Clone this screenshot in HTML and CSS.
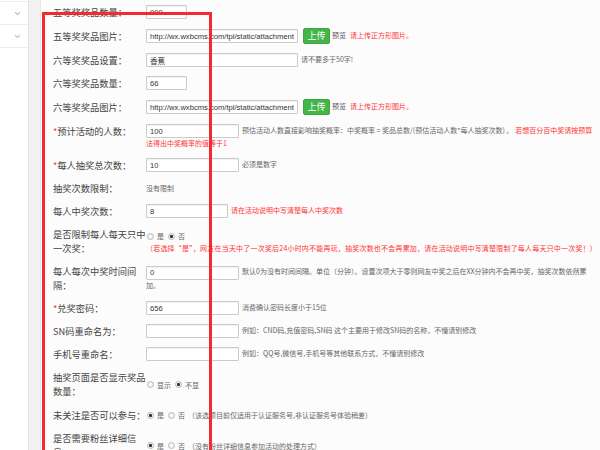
FILE: index.html
```html
<!DOCTYPE html>
<html lang="zh-CN">
<head>
<meta charset="utf-8">
<title>抽奖设置</title>
<link rel="stylesheet" href="styles.css">
</head>
<body>
<div class="page">
  <aside class="sidebar">
    <ul class="menu">
      <li class="menu-item"><svg class="chev" width="7" height="5" viewBox="0 0 7 5"><path d="M1 1.2 L3.5 3.6 L6 1.2" fill="none" stroke="#9bc3df" stroke-width="1.1"/></svg></li>
      <li class="menu-item"><svg class="chev" width="7" height="5" viewBox="0 0 7 5"><path d="M1 1.2 L3.5 3.6 L6 1.2" fill="none" stroke="#9bc3df" stroke-width="1.1"/></svg></li>
    </ul>
  </aside>
  <main class="main">
    <div class="panel">
      <form class="form">
        <div class="row">
          <div class="label">五等奖奖品数量：</div>
          <div class="field"><input class="txt w-xs" value="999"></div>
        </div>
        <div class="row">
          <div class="label">五等奖奖品图片：</div>
          <div class="field"><input class="txt w-long" value="http://wx.wxbcms.com/tpl/static/attachment/images/prize6.png"><button type="button" class="btn">上传</button><span class="preview">预览</span><span class="warn strong">请上传正方形图片。</span></div>
        </div>
        <div class="row">
          <div class="label">六等奖奖品设置：</div>
          <div class="field"><input class="txt w-long" value="香蕉"><span class="after">请不要多于50字!</span></div>
        </div>
        <div class="row">
          <div class="label">六等奖奖品数量：</div>
          <div class="field"><input class="txt w-xs" value="66"></div>
        </div>
        <div class="row">
          <div class="label">六等奖奖品图片：</div>
          <div class="field"><input class="txt w-long" value="http://wx.wxbcms.com/tpl/static/attachment/images/prize6.png"><button type="button" class="btn">上传</button><span class="preview">预览</span><span class="warn strong">请上传正方形图片。</span></div>
        </div>
        <div class="row top">
          <div class="label"><em class="req">*</em>预计活动的人数：</div>
          <div class="field"><input class="txt w-mid" value="100"><span class="after">预估活动人数直接影响抽奖概率：中奖概率 = 奖品总数/(预估活动人数*每人抽奖次数) 。</span><span class="warn tail">若想百分百中奖请按预算法得出中奖概率的值等于1</span></div>
        </div>
        <div class="row">
          <div class="label"><em class="req">*</em>每人抽奖总次数：</div>
          <div class="field"><input class="txt w-mid" value="10"><span class="after">必须是数字</span></div>
        </div>
        <div class="row">
          <div class="label">抽奖次数限制：</div>
          <div class="field">没有限制</div>
        </div>
        <div class="row">
          <div class="label">每人中奖次数：</div>
          <div class="field"><input class="txt w-sm" value="8"><span class="after warn">请在活动说明中写清楚每人中奖次数</span></div>
        </div>
        <div class="row">
          <div class="label">是否限制每人每天只中一次奖：</div>
          <div class="field">
            <div class="opts"><input type="radio" class="radio" name="daily"><span class="opt">是</span><input type="radio" class="radio" name="daily" checked><span class="opt">否</span></div>
            <div class="warn note">（若选择“是”，网友在当天中了一次奖后24小时内不能再玩，抽奖次数也不会再累加，请在活动说明中写清楚限制了每人每天只中一次奖！）</div>
          </div>
        </div>
        <div class="row">
          <div class="label">每人每次中奖时间间隔：</div>
          <div class="field"><input class="txt w-mid" value="0"><span class="after">默认0为没有时间间隔。单位（分钟）。设置次项大于零则网友中奖之后在XX分钟内不会再中奖，抽奖次数依然累加。</span></div>
        </div>
        <div class="row">
          <div class="label"><em class="req">*</em>兑奖密码：</div>
          <div class="field"><input class="txt w-mid" value="656"><span class="after">消费确认密码长度小于15位</span></div>
        </div>
        <div class="row">
          <div class="label">SN码重命名为：</div>
          <div class="field"><input class="txt w-mid" value=""><span class="after">例如：CND码,充值密码,SN码 这个主要用于修改SN码的名称，不懂请别修改</span></div>
        </div>
        <div class="row">
          <div class="label">手机号重命名：</div>
          <div class="field"><input class="txt w-mid" value=""><span class="after">例如：QQ号,微信号,手机号等其他联系方式，不懂请别修改</span></div>
        </div>
        <div class="row">
          <div class="label">抽奖页面是否显示奖品数量：</div>
          <div class="field">
            <div class="opts"><input type="radio" class="radio" name="show"><span class="opt">显示</span><input type="radio" class="radio" name="show" checked><span class="opt">不显</span></div>
          </div>
        </div>
        <div class="row">
          <div class="label">未关注是否可以参与：</div>
          <div class="field">
            <div class="opts"><input type="radio" class="radio" name="follow" checked><span class="opt">是</span><input type="radio" class="radio" name="follow"><span class="opt">否</span><span>（该选项目前仅适用于认证服务号,非认证服务号体验稍差）</span></div>
          </div>
        </div>
        <div class="row">
          <div class="label">是否需要粉丝详细信息：</div>
          <div class="field">
            <div class="opts"><input type="radio" class="radio" name="fans" checked><span class="opt">是</span><input type="radio" class="radio" name="fans"><span class="opt">否</span><span>（没有粉丝详细信息参加活动的处理方式）</span></div>
          </div>
        </div>
        <div class="row">
          <div class="label">活动说明：</div>
          <div class="field"><input class="txt w-long" value=""></div>
        </div>
      </form>
    </div>
  </main>
  <div class="highlight"></div>
</div>
</body>
</html>
```
FILE: styles.css
```css
html, body {
  margin: 0;
  padding: 0;
  width: 600px;
  height: 450px;
  overflow: hidden;
}

body {
  font-family: "Noto Sans CJK SC", "Noto Sans", "Liberation Sans", sans-serif;
  background: #f2f2f2;
  color: #444;
}

.page {
  position: relative;
  display: flex;
  height: 450px;
}

.sidebar {
  width: 28px;
  flex: none;
  background: #fff;
  border-right: 1px solid #e3e3e3;
}

.menu {
  list-style: none;
  margin: 1px 0 0;
  padding: 0;
  border-top: 1px solid #ededed;
}

.menu-item {
  height: 22px;
  border-bottom: 1px solid #ededed;
  display: flex;
  align-items: center;
  justify-content: center;
  padding-left: 6px;
}

.chev {
  display: block;
}

.main {
  flex: 1;
  min-width: 0;
  padding-left: 11px;
}

.panel {
  height: 100%;
  box-sizing: border-box;
  background: #fcfcfc;
  border-left: 1px solid #e6e6e6;
  padding: 5px 2px 0 12px;
}

.form {
  margin: 0;
}

.row {
  display: flex;
  align-items: center;
  margin-bottom: 9px;
}

.row.top {
  align-items: flex-start;
}

.label {
  width: 93px;
  flex: none;
  font-size: 9.25px;
  line-height: 14px;
  color: #444;
}

.req {
  font-style: normal;
  color: #f33;
}

.field {
  flex: 1;
  min-width: 0;
  font-size: 7px;
  line-height: 11px;
  color: #666;
}

.txt {
  box-sizing: border-box;
  height: 14px;
  margin: 0;
  padding: 0 3px;
  vertical-align: middle;
  border: 1px solid #cbcbcb;
  border-radius: 1px;
  background: #fff;
  box-shadow: inset 0 1px 1px rgba(0, 0, 0, 0.06);
  font-family: "Liberation Sans", "Noto Sans CJK SC", sans-serif;
  font-size: 7.6px;
  color: #333;
  outline: none;
}

.w-long { width: 152px; }
.w-mid { width: 93px; }
.w-sm { width: 82px; }
.w-xs { width: 41px; }

.after {
  margin-left: 3px;
}

.btn {
  box-sizing: border-box;
  width: 27px;
  height: 16px;
  margin: 0 2px 0 5px;
  padding: 0;
  vertical-align: middle;
  border: 1px solid #3aa83f;
  border-radius: 2px;
  background: #44b549;
  color: #fff;
  font-family: inherit;
  font-size: 9px;
  line-height: 14px;
}

.preview {
  color: #555;
}

.warn {
  color: #f33;
}

.warn.strong {
  margin-left: 4px;
}

.warn.tail {
  margin-left: 2px;
}

.warn.note {
  letter-spacing: 0.2px;
}

.field > .after.warn {
  margin-left: 3px;
}

.opts {
  line-height: 14px;
  white-space: nowrap;
}

.radio {
  -webkit-appearance: none;
  appearance: none;
  box-sizing: border-box;
  width: 7px;
  height: 7px;
  margin: 0 3px 0 1px;
  vertical-align: middle;
  border: 1px solid #b8b8b8;
  border-radius: 50%;
  background: radial-gradient(circle, #fff 0, #e4e4e4 100%);
}

.radio:checked {
  background: radial-gradient(circle, #333 0, #333 1.3px, #f2f2f2 1.8px);
}

.opt {
  margin-right: 3px;
  vertical-align: middle;
}

.opts > span:last-child {
  vertical-align: middle;
}

.highlight {
  position: absolute;
  left: 42px;
  top: 12px;
  width: 170px;
  height: 470px;
  box-sizing: border-box;
  border: 3px solid #f42a2e;
  pointer-events: none;
}
```
